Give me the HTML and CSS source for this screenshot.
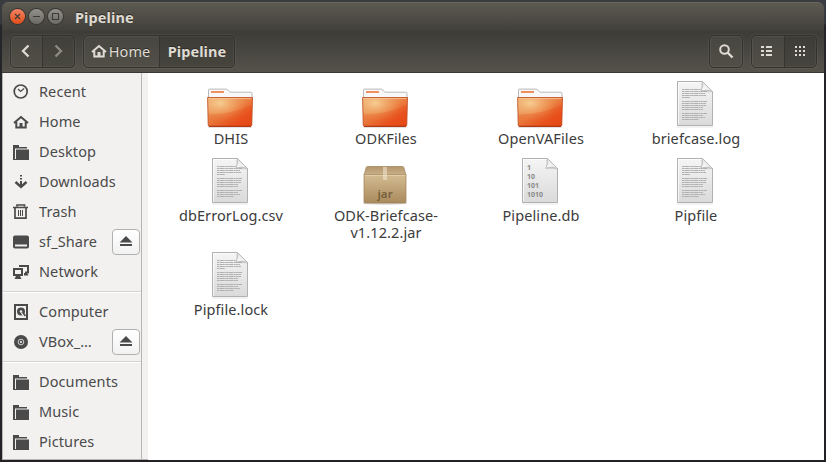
FILE: index.html
```
<!DOCTYPE html>
<html lang="en">
<head>
<meta charset="utf-8">
<title>Pipeline</title>
<link rel="stylesheet" href="styles.css">
</head>
<body>
<svg class="defs" width="0" height="0" aria-hidden="true">
  <defs>
    <linearGradient id="g-orange" x1="0" y1="0" x2="1" y2="1"><stop offset="0" stop-color="#eeb073"/><stop offset=".45" stop-color="#eb8748"/><stop offset=".75" stop-color="#e95420"/><stop offset="1" stop-color="#e44a16"/></linearGradient>
    <radialGradient id="g-glow" cx=".28" cy=".2" r=".6"><stop offset="0" stop-color="#f8d69b" stop-opacity=".85"/><stop offset="1" stop-color="#f0a060" stop-opacity="0"/></radialGradient>
    <linearGradient id="g-paper" x1="0" y1="0" x2="0" y2="1"><stop offset="0" stop-color="#f5f5f5"/><stop offset="1" stop-color="#dadada"/></linearGradient>
    <linearGradient id="g-fold" x1="0" y1="1" x2="1" y2="0"><stop offset="0" stop-color="#fff"/><stop offset=".5" stop-color="#eee"/><stop offset="1" stop-color="#bbb"/></linearGradient>
    <linearGradient id="g-box" x1="0" y1="0" x2="0" y2="1"><stop offset="0" stop-color="#d3bb91"/><stop offset="1" stop-color="#a98a5c"/></linearGradient>
    <linearGradient id="g-lid" x1="0" y1="0" x2="0" y2="1"><stop offset="0" stop-color="#b2956c"/><stop offset="1" stop-color="#cbb088"/></linearGradient>
  </defs>
  <symbol id="folder" viewBox="0 0 48 48">
    <path d="M1 47.6h44" stroke="#000" stroke-opacity=".13"/>
    <path d="M1.500 19V10q0-.9 1-.9h16.300q1.200 0 2 .9l1.500 1.700q.500.500 1.500.500h20q1.200 0 1.200 1V19z" fill="#f8f8f8" stroke="#b9b9b9"/>
    <path d="M4 11h13v2H4z" fill="#f0905f"/>
    <path d="M.6 17.500h44.900L44.800 45q-.1 1.400-1.600 1.400H2.700q-1.400 0-1.500-1.400z" fill="url(#g-orange)"/>
    <path d="M.6 17.500h44.900L44.800 45q-.1 1.400-1.600 1.400H2.700q-1.400 0-1.500-1.400z" fill="url(#g-glow)" stroke="#bd4821" stroke-opacity=".8"/>
    <path d="M1.600 34.500Q26 34 44.500 25v19.500q0 1-1 1h-41q-1 0-1-1z" fill="#e33f0d" fill-opacity=".22"/>
    <path d="M1.500 18.500h43" stroke="#f7c79c" stroke-opacity=".7"/>
    <path d="M2 46.300h42" stroke="#a92e0b"/>
  </symbol>
  <symbol id="paper" viewBox="0 0 48 48">
    <path d="M5 47h36" stroke="#000" stroke-opacity=".1"/>
    <path d="M5.500 1.500h25L40.500 11.500V45.500h-35z" fill="url(#g-paper)" stroke="#b1b1b1"/>
    <path d="M6.500 44.500V2.500H30" fill="none" stroke="#fff" stroke-opacity=".7"/>
    <path d="M28.500 2q2 5-.2 10l12.200.2z" fill="#000" fill-opacity=".12"/>
    <path d="M30.500 1.700q1.200 4.500-1.500 9.300 6-2 11.500.5z" fill="url(#g-fold)" stroke="#b5b5b5" stroke-width=".7"/>
  </symbol>
  <symbol id="text" viewBox="0 0 48 48">
    <use href="#paper"/>
    <g stroke="#b0b0b0" stroke-dasharray="2.500 .4 4 .4 1.500 .4">
      <path d="M10 9.500h19M10 11.500h25M10 13.500h23M10 15.500h24M10 17.500h8M10 21.500h25M10 23.500h24M10 25.500h24M10 27.500h21M10 29.500h21M10 33.500h25M10 35.500h21M10 37.500h23M10 39.500h17"/>
    </g>
  </symbol>
  <symbol id="carton" viewBox="0 0 48 48">
    <path d="M1 45.500h44v1.500q-22 1.500-44 0z" fill="#000" fill-opacity=".16"/>
    <path d="M5.500 9.500h35q1 0 1.300 1L44 18H2l2.200-7.500q.300-1 1.300-1z" fill="url(#g-lid)" stroke="#a58a60" stroke-width=".8"/>
    <path d="M2 18h42v26.500q0 1.500-1.500 1.500h-39Q2 46 2 44.500z" fill="url(#g-box)" stroke="#9d8052" stroke-width=".7"/>
    <path d="M2.500 18.400h41" stroke="#ecdcbd" stroke-opacity=".8"/>
    <path d="M21 10h4v13h-4z" fill="#f0e5d0" fill-opacity=".6"/>
  </symbol>
  <symbol id="s-folder" viewBox="0 0 16 16"><path d="M0 1h6v2h8v1.500H2V16H0z"/><path d="M3 5.500h13V16H2v-1h1z"/></symbol>
  <symbol id="s-home" viewBox="0 0 16 16"><path d="M1 9l7-6 7 6M3.300 8v5.500h9.400V8" fill="none" stroke="currentColor" stroke-width="2"/><path d="M6.500 9h3v5h-3z"/></symbol>
  <symbol id="s-eject" viewBox="0 0 14 14"><path d="M7 1l6.500 6.500H.5zM1 9h12v2H1z"/></symbol>
</svg>

<div class="window">
  <header class="titlebar">
    <span class="knob close"><svg viewBox="0 0 15 15"><path d="M5 5l5 5M10 5l-5 5"/></svg></span>
    <span class="knob"><svg viewBox="0 0 15 15"><path d="M4 7.500h7"/></svg></span>
    <span class="knob"><svg viewBox="0 0 15 15"><path d="M4.500 4.500h6v6h-6z"/></svg></span>
    <h1 class="title">Pipeline</h1>
  </header>
  <nav class="toolbar">
    <div class="group nav">
      <span class="btn"><svg width="16" height="16"><path d="M10.500 2.500L5 8l5.500 5.500" class="chev"/></svg></span>
      <span class="btn dim"><svg width="16" height="16"><path d="M5.500 2.500L11 8l-5.500 5.500" class="chev"/></svg></span>
    </div>
    <div class="group path">
      <span class="btn home"><svg width="16" height="16"><use href="#s-home"/></svg><span>Home</span></span>
      <span class="btn here">Pipeline</span>
    </div>
    <div class="group search">
      <span class="btn"><svg width="16" height="16"><circle cx="6.500" cy="6.500" r="4.300" fill="none" stroke="currentColor" stroke-width="2"/><path d="M9.500 9.500l5 5" stroke="currentColor" stroke-width="2.400"/></svg></span>
    </div>
    <div class="group views">
      <span class="btn"><svg width="12" height="12"><path d="M0 1h3v2H0zM5 1h6v2H5zM0 5h3v2H0zM5 5h6v2H5zM0 9h3v2H0zM5 9h6v2H5z"/></svg></span>
      <span class="btn here"><svg width="12" height="12"><path d="M1 1h2v2H1zM5 1h2v2H5zM9 1h2v2H9zM1 5h2v2H1zM5 5h2v2H5zM9 5h2v2H9zM1 9h2v2H1zM5 9h2v2H5zM9 9h2v2H9z"/></svg></span>
    </div>
  </nav>
  <div class="body">
    <aside class="sidebar">
      <div class="row"><svg viewBox="0 0 16 16"><circle cx="7.700" cy="7.500" r="6.500" fill="none" stroke="currentColor" stroke-width="1.700"/><path d="M5 5L7.600 7.500l3.500-3" fill="none" stroke="currentColor" stroke-width="1.200"/></svg><span class="label">Recent</span></div>
      <div class="row"><svg><use href="#s-home"/></svg><span class="label">Home</span></div>
      <div class="row"><svg><use href="#s-folder"/></svg><span class="label">Desktop</span></div>
      <div class="row"><svg viewBox="0 0 16 16"><path d="M7 1h2v1.500H7zM7 4h2v1.500H7zM7 7h2v5H7z"/><path d="M2.500 8L8 13l5.500-5" fill="none" stroke="currentColor" stroke-width="2.400"/></svg><span class="label">Downloads</span></div>
      <div class="row"><svg viewBox="0 0 16 16"><path d="M0 3.500h15M4 2.500V1h7.500v1.500M2 4v10.200h11V4" fill="none" stroke="currentColor" stroke-width="1.700"/><path d="M5.500 6v6M7.500 6v6M9.500 6v6" stroke="currentColor"/></svg><span class="label">Trash</span></div>
      <div class="row"><svg viewBox="0 0 16 16"><path d="M2 1.500h12q2 0 2 2v9q0 2-2 2H2q-2 0-2-2v-9q0-2 2-2zM2 10.500v2h12v-2z" fill-rule="evenodd"/></svg><span class="label">sf_Share</span><span class="eject"><svg><use href="#s-eject"/></svg></span></div>
      <div class="row"><svg viewBox="0 0 16 16"><path d="M7 3V2h8v6.500h-3" fill="none" stroke="currentColor" stroke-width="2"/><path d="M1 5h8v6H1z" fill="none" stroke="currentColor" stroke-width="2"/><path d="M3 12h4l1.500 3h-7zM11 9h3l1.500 2.500H11z"/></svg><span class="label">Network</span></div>
      <hr>
      <div class="row"><svg viewBox="0 0 16 16"><path d="M2 1h12v14H2z" fill="none" stroke="currentColor" stroke-width="2"/><circle cx="8" cy="7.500" r="4"/><circle cx="8" cy="7.500" r="1.200" fill="#f2f1f0"/><path d="M8.500 9l3.500 4" stroke="#f2f1f0" stroke-width="1.500"/><path d="M10 9l2.500 3" stroke="currentColor" stroke-width="1.500"/></svg><span class="label">Computer</span></div>
      <div class="row"><svg viewBox="0 0 16 16"><circle cx="8" cy="8" r="7"/><circle cx="8" cy="8" r="2.800" fill="none" stroke="#f2f1f0" stroke-width=".8"/><circle cx="8" cy="8" r="1.100" fill="#f2f1f0"/></svg><span class="label">VBox_…</span><span class="eject"><svg><use href="#s-eject"/></svg></span></div>
      <hr>
      <div class="row"><svg><use href="#s-folder"/></svg><span class="label">Documents</span></div>
      <div class="row"><svg><use href="#s-folder"/></svg><span class="label">Music</span></div>
      <div class="row"><svg><use href="#s-folder"/></svg><span class="label">Pictures</span></div>
    </aside>
    <main class="files">
      <figure><svg><use href="#folder"/></svg><figcaption>DHIS</figcaption></figure>
      <figure><svg><use href="#folder"/></svg><figcaption>ODKFiles</figcaption></figure>
      <figure><svg><use href="#folder"/></svg><figcaption>OpenVAFiles</figcaption></figure>
      <figure><svg><use href="#text"/></svg><figcaption>briefcase.log</figcaption></figure>
      <figure><svg><use href="#text"/></svg><figcaption>dbErrorLog.csv</figcaption></figure>
      <figure><svg viewBox="0 0 48 48"><use href="#carton"/><text x="15.500" y="41" class="jar-word">jar</text></svg><figcaption>ODK-Briefcase-<br>v1.12.2.jar</figcaption></figure>
      <figure><svg viewBox="0 0 48 48"><use href="#paper"/><g class="bits"><text x="10" y="12.500">1</text><text x="10" y="21.500">10</text><text x="10" y="30.500">101</text><text x="10" y="39.700">1010</text></g></svg><figcaption>Pipeline.db</figcaption></figure>
      <figure><svg><use href="#text"/></svg><figcaption>Pipfile</figcaption></figure>
      <figure><svg><use href="#text"/></svg><figcaption>Pipfile.lock</figcaption></figure>
    </main>
  </div>
</div>
</body>
</html>
```
FILE: styles.css
```
* { box-sizing: border-box; }
html, body { margin: 0; height: 100%; }
body {
  background: linear-gradient(#393d42 0, #34383d 24px, #25262a 25px, #232125 100%);
  padding: 2px;
  overflow: hidden;
  font: 14.5px "Noto Sans", "Open Sans", sans-serif;
  letter-spacing: .1px;
  color: #4a4a4a;
}
.defs { position: absolute; }
svg { display: block; fill: currentColor; flex: none; }
.window {
  width: 822px;
  height: 458px;
  display: flex;
  flex-direction: column;
  border-radius: 6px 6px 0 0;
  overflow: hidden;
}
.titlebar {
  height: 29px;
  display: flex;
  align-items: center;
  gap: 4px;
  padding: 0 8px 1px;
  background: linear-gradient(#5d5a51, #413f3a);
  border-top: 1px solid #69665c;
}
.knob {
  width: 15px;
  height: 15px;
  border-radius: 50%;
  background: linear-gradient(#92918a, #6b6963);
  box-shadow: 0 0 0 1px #383631;
}
.knob svg { fill: none; stroke: #3c3b37; stroke-width: 1.1; }
.close { background: linear-gradient(#f58462, #df4c1a); }
.title { margin: 0 0 0 8px; font-size: 14.5px; line-height: 20px; color: #dfdbd2; text-shadow: 0 -1px #2b2a27; }
.toolbar {
  height: 42px;
  display: flex;
  align-items: flex-start;
  padding: 4px 7px 0 8px;
  background: linear-gradient(#3d3c38, #55524a);
  border-bottom: 1px solid #3a3833;
  color: #dfdbd2;
}
.group {
  display: flex;
  height: 33px;
  border: 1px solid #33322e;
  border-radius: 5px;
  background: linear-gradient(#474640, #514f47);
  box-shadow: 0 0 0 1px rgba(255, 255, 255, .05), inset 0 0 0 1px rgba(255, 255, 255, .06);
}
.btn { flex: 1; display: flex; align-items: center; justify-content: center; padding-bottom: 2px; text-shadow: 0 -1px #2b2a27; }
.btn + .btn { border-left: 1px solid #35342f; }
.nav { width: 65px; }
.nav .btn { padding-right: 2px; }
.dim { color: #8e8b83; background: rgba(0, 0, 0, .09); }
.chev { fill: none; stroke: currentColor; stroke-width: 2.3; }
.path { width: 152px; margin-left: 8px; }
.home { flex: 0 0 75px; gap: 2px; padding-right: 2px; }
.here { background: rgba(0, 0, 0, .13); font-weight: 700; border-radius: 0 4px 4px 0; }
.search { width: 34px; margin-left: auto; }
.views { width: 66px; margin-left: 8px; }
.views .btn { padding-right: 1px; }
.body { flex: 1; min-height: 0; display: flex; background: #fff; }
.sidebar {
  width: 146px;
  padding: 4px 0 0;
  background: linear-gradient(90deg, #f2f1f0 138px, #b6b5b3 138px, #b6b5b3 139px, #f2f1f0 139px);
  border-left: 1px solid #b6b5b3;
  border-bottom: 1px solid #b6b5b3;
}
.row { height: 30px; display: flex; align-items: center; padding: 0 8px 0 10px; }
.row > svg { width: 16px; height: 16px; margin-right: 10px; }
.label { padding-bottom: 2px; }
.eject {
  width: 28px;
  height: 26px;
  margin-left: auto;
  display: grid;
  place-items: center;
  background: linear-gradient(#fff, #f2f2f2);
  border: 1px solid #b2b0ad;
  border-radius: 4px;
}
.eject svg { width: 14px; height: 14px; }
hr { width: 138px; height: 2px; margin: 4px 0; border: 0; background: linear-gradient(#d4d3d1 50%, #fff 50%); }
.files {
  flex: 1;
  display: grid;
  grid-template-columns: repeat(4, 154px);
  align-content: start;
  gap: 10px 1px;
  padding: 7px 0 0 6px;
  color: #3c3c3c;
}
figure { margin: 0; display: flex; flex-direction: column; align-items: center; gap: 2px; }
figure > svg { width: 48px; height: 48px; }
figcaption { line-height: 17px; text-align: center; white-space: nowrap; }
.jar-word { font: 600 11.5px "Noto Sans", sans-serif; fill: #75603c; }
.bits { font: 700 7px "Noto Sans", sans-serif; letter-spacing: 0; fill: #8a8a8a; }
```
